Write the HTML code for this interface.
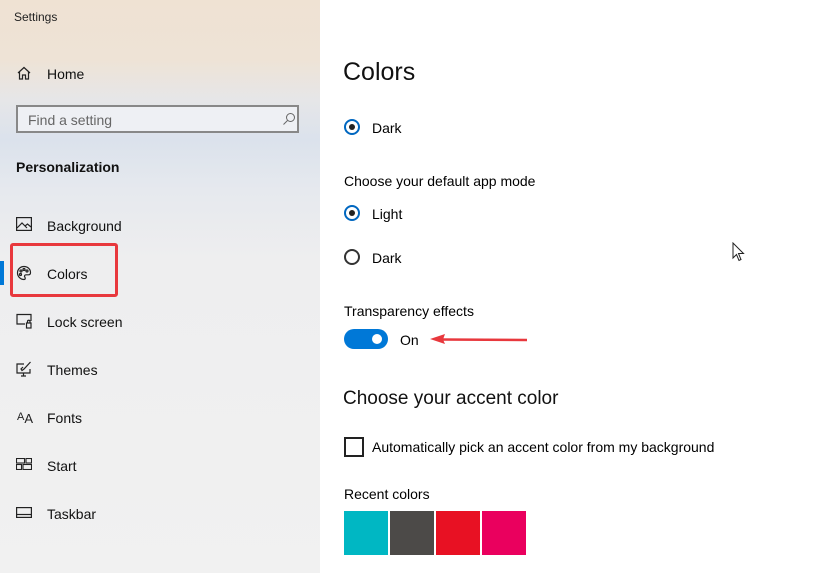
<!DOCTYPE html>
<html><head><style>
body{margin:0;width:824px;height:573px;overflow:hidden;font-family:"Liberation Sans",sans-serif;color:#000;position:relative;background:#fff}
.side{position:absolute;left:0;top:0;width:320px;height:573px;background:linear-gradient(180deg,#efe2d3 0px,#eee3d6 60px,#e6e6e8 100px,#dbe2ec 140px,#e6e9ee 190px,#eeeeef 260px,#f1f1f1 573px)}
.a{position:absolute;white-space:nowrap}
.nav{position:absolute;left:47px;font-size:14px;color:#111}
.ic{position:absolute;left:16px}
.r{position:absolute;left:344px;width:16px;height:16px;border:2px solid #0067c0;border-radius:50%;box-sizing:border-box}
.r.on::after{content:"";position:absolute;left:3px;top:3px;width:6px;height:6px;border-radius:50%;background:#222}
.r.off{border-color:#333}
.sw{position:absolute;top:511px;width:44px;height:44px}
</style></head><body>
<div class="side"></div>
<div class="a" style="left:14px;top:10px;font-size:12px;color:#222">Settings</div>
<svg class="ic" style="top:65px" width="16" height="16" viewBox="0 0 16 16" fill="none" stroke="#222" stroke-width="1.2"><path d="M2 8L8 2.5L14 8M3.5 6.8V14H6.5V10H9.5V14H12.5V6.8"/></svg>
<div class="nav" style="top:66px">Home</div>
<div class="a" style="left:16px;top:105px;width:283px;height:28px;border:2px solid #888;box-sizing:border-box;background:#eef0f4"></div>
<div class="a" style="left:28px;top:112px;font-size:14px;color:#666">Find a setting</div>
<svg class="a" style="left:282px;top:112px" width="14" height="14" viewBox="0 0 14 14" fill="none" stroke="#666" stroke-width="1"><circle cx="8.5" cy="5.5" r="4"/><path d="M5.5 8.5L1.5 12.5"/></svg>
<div class="a" style="left:16px;top:159px;font-size:14px;font-weight:bold;color:#111">Personalization</div>
<svg class="ic" style="top:217px" width="16" height="14" viewBox="0 0 16 14" fill="none" stroke="#222" stroke-width="1.2"><rect x="0.6" y="0.6" width="14.8" height="12.8"/><path d="M1 11L6 6L11 11M9 9L11.5 7L15 10"/></svg>
<div class="nav" style="top:218px">Background</div>
<div class="a" style="left:0;top:261px;width:4px;height:24px;background:#0078d7"></div>
<div class="a" style="left:10px;top:243px;width:108px;height:54px;border:3px solid #e8383d;border-radius:3px;box-sizing:border-box"></div>
<svg class="ic" style="top:265px" width="16" height="16" viewBox="0 0 16 16" fill="none" stroke="#222" stroke-width="1.2"><path d="M8 1.5C4 1.5 1.5 4.5 1.5 8C1.5 11.5 4.5 14.5 8 14.5C9.5 14.5 9.5 13 8.8 12C8 11 8.8 9.8 10 9.8H12.5C14 9.8 14.5 8.5 14.5 7.5C14.5 4 11.5 1.5 8 1.5Z"/><circle cx="5" cy="6" r="1"/><circle cx="8" cy="4.5" r="1"/><circle cx="11" cy="6" r="1"/><circle cx="4.5" cy="9.5" r="1"/></svg>
<div class="nav" style="top:266px">Colors</div>
<svg class="ic" style="top:313px" width="16" height="16" viewBox="0 0 16 16" fill="none" stroke="#222" stroke-width="1.2"><path d="M9 11H1V1.5H15V8"/><rect x="10.5" y="10" width="4.5" height="5"/><path d="M11.5 10V8.5A1.2 1.2 0 0 1 14 8.5V10"/></svg>
<div class="nav" style="top:314px">Lock screen</div>
<svg class="ic" style="top:361px" width="16" height="16" viewBox="0 0 16 16" fill="none" stroke="#222" stroke-width="1.2"><path d="M8 3H1V12H14V8M5 15H10M7.5 12V15"/><path d="M14.5 1L8 8L6 9.5L5 8L7 6"/></svg>
<div class="nav" style="top:362px">Themes</div>
<div class="a" style="left:17px;top:408px;font-size:11px;color:#222">A<span style="font-size:13px;position:relative;top:3px">A</span></div>
<div class="nav" style="top:410px">Fonts</div>
<svg class="ic" style="top:458px" width="16" height="12" viewBox="0 0 16 12" fill="none" stroke="#222" stroke-width="1.1"><rect x="0.5" y="0.5" width="8" height="4.5"/><rect x="10" y="0.5" width="5.5" height="4.5"/><rect x="0.5" y="6.5" width="5" height="5"/><rect x="7" y="6.5" width="8.5" height="5"/></svg>
<div class="nav" style="top:458px">Start</div>
<svg class="ic" style="top:507px" width="16" height="11" viewBox="0 0 16 11" fill="none" stroke="#222" stroke-width="1.2"><rect x="0.6" y="0.6" width="14.8" height="9.8"/><path d="M1 7.5H15"/></svg>
<div class="nav" style="top:506px">Taskbar</div>

<div class="a" style="left:343px;top:58px;font-size:25px;color:#111">Colors</div>
<div class="r on" style="top:119px"></div><div class="a" style="left:372px;top:120px;font-size:14px">Dark</div>
<div class="a" style="left:344px;top:173px;font-size:14px">Choose your default app mode</div>
<div class="r on" style="top:205px"></div><div class="a" style="left:372px;top:206px;font-size:14px">Light</div>
<div class="r off" style="top:249px"></div><div class="a" style="left:372px;top:250px;font-size:14px">Dark</div>
<div class="a" style="left:344px;top:303px;font-size:14px">Transparency effects</div>
<div class="a" style="left:344px;top:329px;width:44px;height:20px;border-radius:10px;background:#0078d7"></div>
<div class="a" style="left:372px;top:334px;width:10px;height:10px;border-radius:50%;background:#fff"></div>
<div class="a" style="left:400px;top:332px;font-size:14px">On</div>
<svg class="a" style="left:428px;top:332px" width="102" height="14" viewBox="0 0 102 14"><path d="M12 7.5L99 8" stroke="#e8383d" stroke-width="2.5"/><path d="M2 7L17 2L15 7.5L17 12Z" fill="#e8383d"/></svg>
<div class="a" style="left:343px;top:388px;font-size:19px;color:#111">Choose your accent color</div>
<div class="a" style="left:344px;top:437px;width:20px;height:20px;border:2px solid #222;box-sizing:border-box"></div>
<div class="a" style="left:372px;top:439px;font-size:14px">Automatically pick an accent color from my background</div>
<div class="a" style="left:344px;top:486px;font-size:14px">Recent colors</div>
<div class="sw" style="left:344px;background:#00b7c3"></div>
<div class="sw" style="left:390px;background:#4c4a48"></div>
<div class="sw" style="left:436px;background:#e81123"></div>
<div class="sw" style="left:482px;background:#ea005e"></div>
<svg class="a" style="left:732px;top:242px" width="13" height="20" viewBox="0 0 13 20"><path d="M1 1V16L4.5 12.5L7 18.5L9 17.5L6.5 11.5H11.5Z" fill="#fff" stroke="#222" stroke-width="1"/></svg>
</body></html>
